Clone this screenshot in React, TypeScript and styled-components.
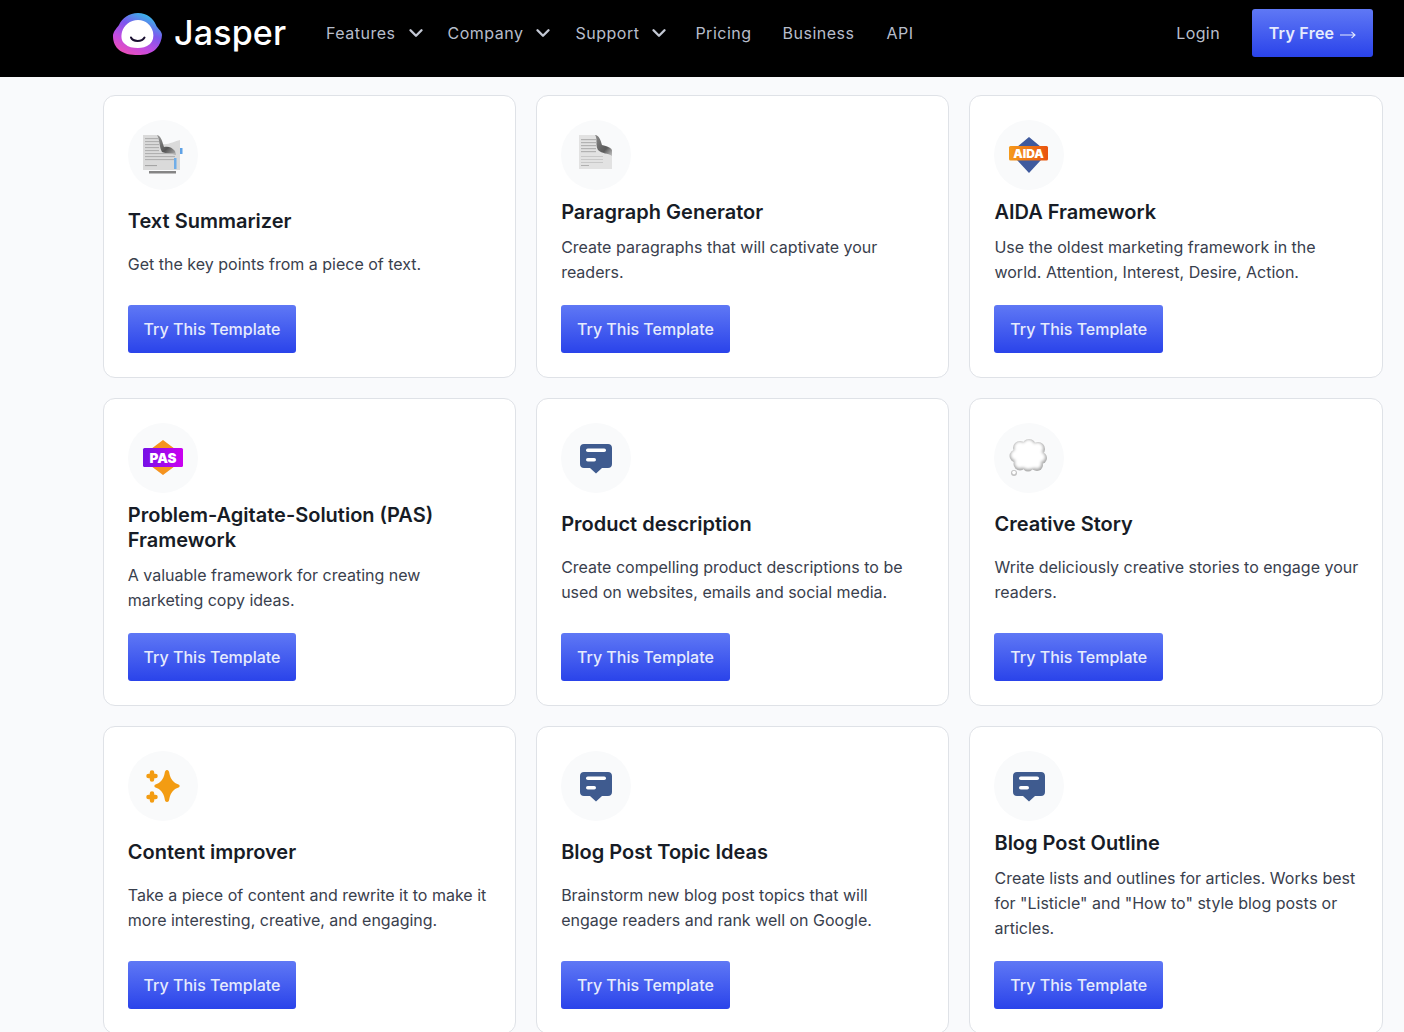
import React from "react";
import styled, { createGlobalStyle } from "styled-components";
import { ChevronDown } from "lucide-react";

const Global = createGlobalStyle`
  html, body { margin: 0; padding: 0; height: 1032px; overflow: hidden; background: #f9fafc; }
  * { box-sizing: border-box; }
  body { font-family: Inter, "Liberation Sans", sans-serif; -webkit-font-smoothing: antialiased; }
`;

const Page = styled.div`
  height: 1032px;
  overflow: hidden;
`;

const Header = styled.header`
  height: 77px;
  background: #000;
  display: flex;
  align-items: center;
  padding: 9px 31px 20px 113px;
`;

const Brand = styled.a`
  display: flex;
  align-items: center;
  gap: 11px;
  width: 213px;
  color: #fff;
  font-family: Inter, sans-serif;
  font-size: 34px;
  font-weight: 500;
  letter-spacing: 0.15px;
  line-height: 44px;
`;

const Nav = styled.nav`
  display: flex;
  align-items: center;
  flex: 1;
`;

const NavLink = styled.a<{ $pad: number }>`
  display: flex;
  align-items: center;
  color: #b7bdcb;
  font-size: 16px;
  letter-spacing: 0.5px;
  padding-right: ${(p) => p.$pad}px;
  svg { margin-left: 9px; margin-right: -6px; color: #c3c8d4; }
`;

const Login = styled.a`
  color: #b9bfcc;
  font-size: 16px;
  letter-spacing: 0.4px;
  margin-right: 32px;
`;

const BlueButton = styled.a`
  display: inline-flex;
  align-items: center;
  justify-content: center;
  height: 48px;
  border-radius: 3px;
  background: linear-gradient(180deg, #5f78f5 0%, #2a43ea 100%);
  color: #e6ebfd;
  font-size: 16px;
  font-weight: 500;
  white-space: nowrap;
`;

const TryFree = styled(BlueButton)`
  width: 121px;
  font-weight: 600;
  letter-spacing: 0.25px;
  gap: 6px;
`;

const Grid = styled.main`
  display: grid;
  grid-template-columns: repeat(3, 413.33px);
  gap: 20px;
  margin: 18px 0 0 102.8px;
`;

const Card = styled.article`
  display: flex;
  flex-direction: column;
  background: #fff;
  border: 1px solid #dfe2e7;
  border-radius: 12px;
  padding: 24px;
`;

const IconCircle = styled.div`
  width: 70px;
  height: 70px;
  border-radius: 50%;
  background: #f9fafb;
  flex: none;
  svg { display: block; }
`;

const Body = styled.div`
  flex: 1;
  display: flex;
  flex-direction: column;
  justify-content: space-evenly;
  gap: 10px;
  padding: 10.4px 0 19.6px;
`;

const Title = styled.h3`
  margin: 0;
  color: #171c26;
  font-size: 20px;
  font-weight: 600;
  line-height: 25px;
`;

const Desc = styled.p`
  margin: 0 -2px 0 0;
  color: #39404d;
  font-size: 16px;
  font-weight: 400;
  line-height: 25px;
`;

const TemplateButton = styled(BlueButton)`
  width: 168.5px;
  align-self: flex-start;
`;

const S = { width: 70, height: 70, viewBox: "0 0 70 70" };

const SummarizerIcon = () => (
  <svg {...S}>
    <defs>
      <filter id="soft1"><feGaussianBlur stdDeviation="0.45" /></filter>
      <linearGradient id="fold1" x1="0" y1="0" x2="1" y2="1">
        <stop offset="0" stopColor="#9a9a9a" />
        <stop offset="0.6" stopColor="#555" />
        <stop offset="1" stopColor="#b5b5b5" />
      </linearGradient>
    </defs>
    <g filter="url(#soft1)">
      <rect x="21" y="51" width="27" height="2.5" fill="#858585" />
      <path d="M15 15H28C32 15 34 19 35 24C40 25 47 21 52 20V50H15Z" fill="#dadada" />
      <path d="M29 15C33 16 34 21 36 27C40 26 44 27 47 31L48 35C44 33 38 34 34 32C31 27 32 20 29 15Z" fill="url(#fold1)" />
      {[18, 21, 24, 27, 30, 33, 36, 39].map((y, i) => (
        <rect key={y} x="17" y={y} width={i > 4 ? 30 : 14} height="1.1" fill="#b0b0b0" />
      ))}
      <rect x="17" y="45" width="12" height="1.1" fill="#a5a5a5" />
      <rect x="52" y="28" width="2.500" height="6" fill="#5ea2e6" />
      <rect x="46" y="38" width="2.500" height="11" fill="#6fade8" />
    </g>
  </svg>
);

const ParagraphIcon = () => (
  <svg {...S}>
    <defs>
      <filter id="soft2"><feGaussianBlur stdDeviation="0.5" /></filter>
      <linearGradient id="fold2" x1="0" y1="0" x2="1" y2="1">
        <stop offset="0" stopColor="#8a8a8a" />
        <stop offset="0.65" stopColor="#5a5a5a" />
        <stop offset="1" stopColor="#c5c5c5" />
      </linearGradient>
    </defs>
    <g filter="url(#soft2)">
      <path d="M18 15H34C38 16 39 22 40 26C44 27 48 26 51 29V49H18Z" fill="#e2e2e2" />
      <path d="M34 15C38 15 40 21 41 25C45 26 49 27 51 30V36C47 33 41 34 37 30C34 25 37 19 34 15Z" fill="url(#fold2)" />
      {[19, 22, 25, 28, 31].map((y) => (
        <rect key={y} x="20" y={y} width="15" height="1.2" fill="#b2b2b2" />
      ))}
      {[36, 39, 42].map((y) => (
        <rect key={y} x="20" y={y} width="22" height="1" fill="#c8c8c8" />
      ))}
      <rect x="20" y="45" width="8" height="1" fill="#b0b0b0" />
    </g>
  </svg>
);

const AidaIcon = () => (
  <svg {...S}>
    <defs>
      <linearGradient id="aida" x1="0" y1="0" x2="1" y2="0">
        <stop offset="0" stopColor="#f59a1c" />
        <stop offset="1" stopColor="#e9530f" />
      </linearGradient>
    </defs>
    <path d="M35 17L47 27H23ZM35 53L47 40H23Z" fill="#3f5a9e" />
    <rect x="15" y="26" width="39" height="14.5" rx="1.5" fill="url(#aida)" />
    <text x="34.5" y="37.7" textAnchor="middle" fontFamily="Inter, sans-serif" fontWeight="900" fontSize="12" fill="#fff">AIDA</text>
  </svg>
);

const PasIcon = () => (
  <svg {...S}>
    <defs>
      <linearGradient id="pas" x1="0" y1="0" x2="1" y2="0">
        <stop offset="0" stopColor="#7611e6" />
        <stop offset="1" stopColor="#cb00f0" />
      </linearGradient>
    </defs>
    <path d="M35 17L47 26H23ZM35 52L47 43H23Z" fill="#f5931f" />
    <rect x="15" y="25" width="40" height="19" rx="1.5" fill="url(#pas)" />
    <text x="35" y="39.700" textAnchor="middle" fontFamily="Inter, sans-serif" fontWeight="900" fontSize="13.500" fill="#fff">PAS</text>
  </svg>
);

const ChatIcon = () => (
  <svg {...S}>
    <path d="M23 21H47C49.5 21 51 22.5 51 25V41C51 43.5 49.5 45 47 45H41L35 50.5L29 45H23C20.500 45 19 43.500 19 41V25C19 22.500 20.500 21 23 21Z" fill="#3f5b8f" />
    <rect x="25" y="25.500" width="20" height="3.500" rx="1.750" fill="#fff" />
    <rect x="25" y="35" width="10" height="3.500" rx="1.750" fill="#fff" />
  </svg>
);

const CloudIcon = () => {
  const puffs: [number, number, number][] = [
    [26, 25, 7], [35, 23, 7], [44, 26, 7], [47, 35, 6], [43, 42, 6], [34, 43, 5.500], [26, 41, 6.500], [22, 33, 6.500],
  ];
  return (
    <svg {...S}>
      <defs>
        <filter id="cloudBlur"><feGaussianBlur stdDeviation="1.400" /></filter>
        <filter id="cloudEdge"><feGaussianBlur stdDeviation="0.350" /></filter>
      </defs>
      <g filter="url(#cloudEdge)">
        {puffs.map(([x, y, r]) => (
          <circle key={`${x}-${y}`} cx={x} cy={y} r={r} fill="#a9a9a9" />
        ))}
        <circle cx="35" cy="34" r="13" fill="#a9a9a9" />
      </g>
      <g filter="url(#cloudBlur)">
        {puffs.map(([x, y, r]) => (
          <circle key={`${x}-${y}`} cx={x - 0.3} cy={y - 1} r={r - 1.300} fill="#fff" />
        ))}
        <circle cx="35" cy="33" r="13" fill="#fff" />
      </g>
      <circle cx="20" cy="50" r="3" fill="#c2c2c2" filter="url(#cloudEdge)" />
      <circle cx="20" cy="49.600" r="1.800" fill="#fff" filter="url(#cloudEdge)" />
    </svg>
  );
};

const SparkIcon = () => (
  <svg {...S}>
    <path d="M39 19C40.500 19 41 20 41.500 23C42.500 28 45.500 32 50.500 33.500C52 34 52 36 50.500 36.500C45.500 38 42.500 42 41.500 47C41 50 40.500 51 39 51C37.500 51 37 50 36.500 47C35.500 42 32.500 38 27.500 36.500C26 36 26 34 27.500 33.500C32.500 32 35.500 28 36.500 23C37 20 37.500 19 39 19Z" fill="#f39c12" />
    <g stroke="#f39c12" strokeWidth="4.500" strokeLinecap="round">
      <path d="M24 21.500V28.500M20.500 25H27.500" />
      <path d="M24 42.500V49.500M20.500 46H27.500" />
    </g>
  </svg>
);

const Logo = () => (
  <svg width="50" height="42" viewBox="0 0 50 42" style={{ marginTop: 1 }}>
    <defs>
      <linearGradient id="ring" x1="0.75" y1="0" x2="0.2" y2="1">
        <stop offset="0" stopColor="#2ec5e8" />
        <stop offset="0.38" stopColor="#7b58ee" />
        <stop offset="0.7" stopColor="#c44be0" />
        <stop offset="1" stopColor="#f04fb4" />
      </linearGradient>
    </defs>
    <path d="M25 0C34 0 40 5 43 12C44 15 49 18 49 22C49 26 47 32 43 36C38 41 31 42 25 42C18 42 10 41 5 36C1 32 0 27 0 23C0 19 3 16 6 12C9 5 16 0 25 0Z" fill="url(#ring)" />
    <path d="M25 7C33 7 38 12 40 19C41 24 40 28 37 31C33 34 29 35 25 35C20 35 15 34 12 31C8 28 8 23 9 19C11 12 17 7 25 7Z" fill="#fff" />
    <path d="M18 24.500C20 29 29 29 31.500 24.500" fill="none" stroke="#1a1030" strokeWidth="2" strokeLinecap="round" />
  </svg>
);

const LongArrow = () => (
  <svg width="16" height="10" viewBox="0 0 16 10" style={{ marginTop: 3 }}>
    <path d="M0 5H15M11.500 1.800L15 5L11.500 8.200" fill="none" stroke="#e6ebfd" strokeWidth="1.100" />
  </svg>
);

const cards: { icon: React.ReactNode; title: string; desc: string }[] = [
  { icon: <SummarizerIcon />, title: "Text Summarizer", desc: "Get the key points from a piece of text." },
  { icon: <ParagraphIcon />, title: "Paragraph Generator", desc: "Create paragraphs that will captivate your readers." },
  { icon: <AidaIcon />, title: "AIDA Framework", desc: "Use the oldest marketing framework in the world. Attention, Interest, Desire, Action." },
  { icon: <PasIcon />, title: "Problem-Agitate-Solution (PAS) Framework", desc: "A valuable framework for creating new marketing copy ideas." },
  { icon: <ChatIcon />, title: "Product description", desc: "Create compelling product descriptions to be used on websites, emails and social media." },
  { icon: <CloudIcon />, title: "Creative Story", desc: "Write deliciously creative stories to engage your readers." },
  { icon: <SparkIcon />, title: "Content improver", desc: "Take a piece of content and rewrite it to make it more interesting, creative, and engaging." },
  { icon: <ChatIcon />, title: "Blog Post Topic Ideas", desc: "Brainstorm new blog post topics that will engage readers and rank well on Google." },
  { icon: <ChatIcon />, title: "Blog Post Outline", desc: 'Create lists and outlines for articles. Works best for "Listicle" and "How to" style blog posts or articles.' },
];

const navItems: { label: string; menu?: boolean; pad: number }[] = [
  { label: "Features", menu: true, pad: 27 },
  { label: "Company", menu: true, pad: 27 },
  { label: "Support", menu: true, pad: 31 },
  { label: "Pricing", pad: 31 },
  { label: "Business", pad: 32 },
  { label: "API", pad: 32 },
];

export default function App() {
  return (
    <Page>
      <Global />
      <Header>
        <Brand>
          <Logo />
          Jasper
        </Brand>
        <Nav>
          {navItems.map((n) => (
            <NavLink key={n.label} $pad={n.pad}>
              {n.label}
              {n.menu && <ChevronDown size={22} strokeWidth={2.6} />}
            </NavLink>
          ))}
        </Nav>
        <Login>Login</Login>
        <TryFree>Try Free<LongArrow /></TryFree>
      </Header>
      <Grid>
        {cards.map((c) => (
          <Card key={c.title}>
            <IconCircle>{c.icon}</IconCircle>
            <Body>
              <Title>{c.title}</Title>
              <Desc>{c.desc}</Desc>
            </Body>
            <TemplateButton>Try This Template</TemplateButton>
          </Card>
        ))}
      </Grid>
    </Page>
  );
}
